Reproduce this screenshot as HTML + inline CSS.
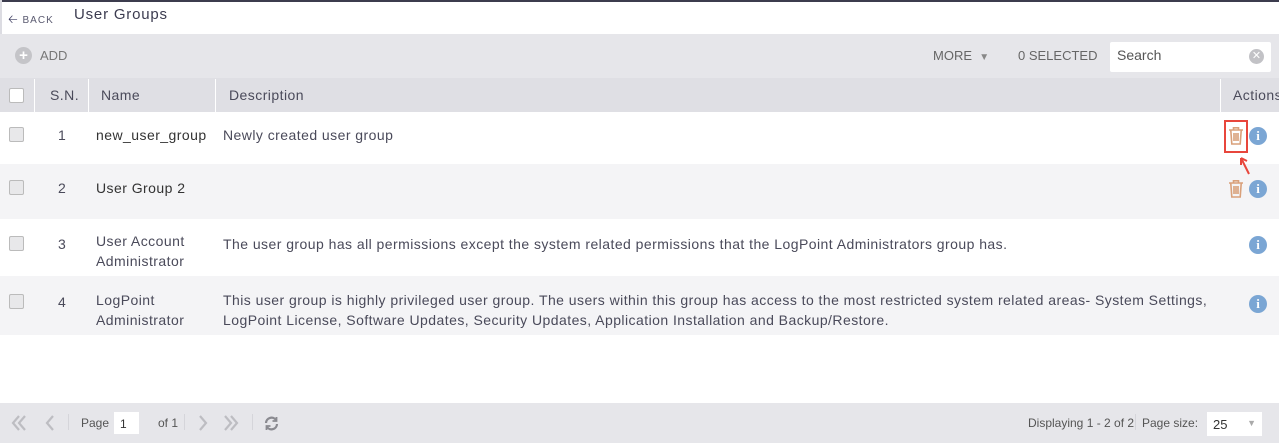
<!DOCTYPE html>
<html><head><style>
*{margin:0;padding:0;box-sizing:border-box}
body{width:1279px;height:443px;position:relative;overflow:hidden;background:#fff;font-family:"Liberation Sans",sans-serif;color:#4a4a5a}
.a{position:absolute}
.row{position:absolute;left:0;width:1279px}
.cb{position:absolute;left:9px;width:15px;height:15px;border:1px solid #bbb;background:#e8e8ea;border-radius:2px}
.t{position:absolute;font-size:14px;color:#4a4a5a;line-height:20px;letter-spacing:0.45px}
.vl{position:absolute;top:79px;width:1px;height:33px;background:#fff}
</style></head><body>
<div class="a" style="left:0;top:0;width:1279px;height:2px;background:#3c3c4e"></div>
<div class="a" style="left:0;top:0;width:2px;height:34px;background:#dcdce2"></div>
<div class="a" style="left:8px;top:10px;font-size:10px;color:#5a5a70;letter-spacing:1px"><span style="font-size:12px;color:#3c3c60">&#129120;</span> BACK</div>
<div class="a" style="left:74px;top:6px;font-size:15px;color:#3c3c50;letter-spacing:.8px">User Groups</div>
<div class="a" style="left:0;top:34px;width:1279px;height:44px;background:#e6e6ea"></div>
<div class="a" style="left:15px;top:47px;width:17px;height:17px;border-radius:50%;background:#c4c4c8;color:#fff;font-size:15px;line-height:17px;text-align:center;font-weight:bold">+</div>
<div class="a" style="left:40px;top:48px;font-size:13px;color:#777">ADD</div>
<div class="a" style="left:933px;top:48px;font-size:13px;color:#666">MORE &nbsp;<span style="font-size:10px;color:#888">&#9660;</span></div>
<div class="a" style="left:1018px;top:48px;font-size:13px;color:#666">0 SELECTED</div>
<div class="a" style="left:1110px;top:42px;width:161px;height:30px;background:#fff;border-radius:2px"></div>
<div class="a" style="left:1117px;top:47px;font-size:14px;color:#555">Search</div>
<div class="a" style="left:1249px;top:49px;width:15px;height:15px;border-radius:50%;background:#c2c2c6;color:#fff;font-size:11px;line-height:15px;text-align:center">&#10005;</div>
<div class="a" style="left:0;top:78px;width:1279px;height:34px;background:#dfdfe4"></div>
<div class="vl" style="left:34px"></div><div class="vl" style="left:88px"></div><div class="vl" style="left:215px"></div><div class="vl" style="left:1220px"></div>
<div class="cb" style="top:88px;background:#fff"></div>
<div class="t" style="left:50px;top:85px">S.N.</div>
<div class="t" style="left:101px;top:85px">Name</div>
<div class="t" style="left:229px;top:85px">Description</div>
<div class="t" style="left:1233px;top:85px">Actions</div>

<div class="row" style="top:112px;height:52px;background:#fff"></div>
<div class="row" style="top:164px;height:55px;background:#f4f4f6"></div>
<div class="row" style="top:219px;height:57px;background:#fff"></div>
<div class="row" style="top:276px;height:59px;background:#f4f4f6"></div>

<div class="cb" style="top:127px"></div><div class="t" style="left:58px;top:125px">1</div>
<div class="t" style="left:96px;top:125px;color:#333">new_user_group</div>
<div class="t" style="left:223px;top:125px">Newly created user group</div>
<div class="cb" style="top:180px"></div><div class="t" style="left:58px;top:178px">2</div>
<div class="t" style="left:96px;top:178px;color:#333">User Group 2</div>
<div class="cb" style="top:236px"></div><div class="t" style="left:58px;top:234px">3</div>
<div class="t" style="left:96px;top:231px;width:110px">User Account Administrator</div>
<div class="t" style="left:223px;top:234px;white-space:nowrap">The user group has all permissions except the system related permissions that the LogPoint Administrators group has.</div>
<div class="cb" style="top:294px"></div><div class="t" style="left:58px;top:292px">4</div>
<div class="t" style="left:96px;top:290px;width:110px">LogPoint Administrator</div>
<div class="t" style="left:223px;top:290px;width:990px">This user group is highly privileged user group. The users within this group has access to the most restricted system related areas- System Settings,<br>LogPoint License, Software Updates, Security Updates, Application Installation and Backup/Restore.</div>

<svg class="a" style="left:1228px;top:126px" width="16" height="20" viewBox="0 0 16 20"><g fill="none" stroke="#d9a07a" stroke-width="1.6"><path d="M1 4h14M5.5 4V1.8h5V4"/><path d="M2.8 4.5l1 13.5h8.4l1-13.5"/><path d="M6 7v8M8 7v8M10 7v8"/></g></svg>
<div class="a" style="left:1224px;top:120px;width:24px;height:33px;border:2px solid #e8463c"></div>
<svg class="a" style="left:1238px;top:154px" width="14" height="22" viewBox="0 0 14 22"><path d="M11 20L3 4M3 4l0 7M3 4l6 3" stroke="#e8463c" stroke-width="2" fill="none"/></svg>
<svg class="a" style="left:1228px;top:179px" width="16" height="20" viewBox="0 0 16 20"><g fill="none" stroke="#d9a07a" stroke-width="1.6"><path d="M1 4h14M5.5 4V1.8h5V4"/><path d="M2.8 4.5l1 13.5h8.4l1-13.5"/><path d="M6 7v8M8 7v8M10 7v8"/></g></svg>
<div class="a" style="left:1249px;top:127px;width:18px;height:18px;border-radius:50%;background:#7ba6d4;color:#fff;font:bold 13px/18px 'Liberation Serif',serif;text-align:center">i</div>
<div class="a" style="left:1249px;top:180px;width:18px;height:18px;border-radius:50%;background:#7ba6d4;color:#fff;font:bold 13px/18px 'Liberation Serif',serif;text-align:center">i</div>
<div class="a" style="left:1249px;top:236px;width:18px;height:18px;border-radius:50%;background:#7ba6d4;color:#fff;font:bold 13px/18px 'Liberation Serif',serif;text-align:center">i</div>
<div class="a" style="left:1249px;top:295px;width:18px;height:18px;border-radius:50%;background:#7ba6d4;color:#fff;font:bold 13px/18px 'Liberation Serif',serif;text-align:center">i</div>

<div class="a" style="left:0;top:403px;width:1279px;height:40px;background:#e6e6ea"></div>
<svg class="a" style="left:10px;top:414px" width="250" height="18" viewBox="0 0 250 18" fill="none" stroke="#bdbdc2" stroke-width="2.2">
<path d="M9 2L3 9l6 7M15 2L9 9l6 7"/><path d="M43 2l-6 7 6 7"/>
<path d="M190 2l6 7-6 7"/><path d="M215 2l6 7-6 7M221 2l6 7-6 7"/></svg>
<div class="a" style="left:68px;top:414px;width:1px;height:16px;background:#d5d5da"></div>
<div class="a" style="left:81px;top:416px;font-size:12px;color:#555">Page</div>
<div class="a" style="left:114px;top:412px;width:25px;height:22px;background:#fff;font-size:12px;padding:5px 6px;color:#333">1</div>
<div class="a" style="left:158px;top:416px;font-size:12px;color:#555">of 1</div>
<div class="a" style="left:184px;top:414px;width:1px;height:16px;background:#d5d5da"></div>
<div class="a" style="left:252px;top:414px;width:1px;height:16px;background:#d5d5da"></div>
<svg class="a" style="left:264px;top:416px" width="15" height="15" viewBox="0 0 15 15" fill="none" stroke="#8a8a90" stroke-width="2.2"><path d="M2 7a5.5 5.5 0 0 1 10-3M13 8a5.5 5.5 0 0 1-10 3"/><path d="M12.5 1v4h-4M2.5 14v-4h4" stroke-width="1.8"/></svg>
<div class="a" style="left:1028px;top:416px;font-size:12px;color:#555">Displaying 1 - 2 of 2</div>
<div class="a" style="left:1135px;top:414px;width:1px;height:16px;background:#d5d5da"></div>
<div class="a" style="left:1142px;top:416px;font-size:12px;color:#555">Page size:</div>
<div class="a" style="left:1207px;top:412px;width:55px;height:24px;background:#fff;font-size:13px;padding:5px 6px;color:#333">25<span style="position:absolute;right:6px;top:6px;font-size:9px;color:#aaa">&#9660;</span></div>
</body></html>
